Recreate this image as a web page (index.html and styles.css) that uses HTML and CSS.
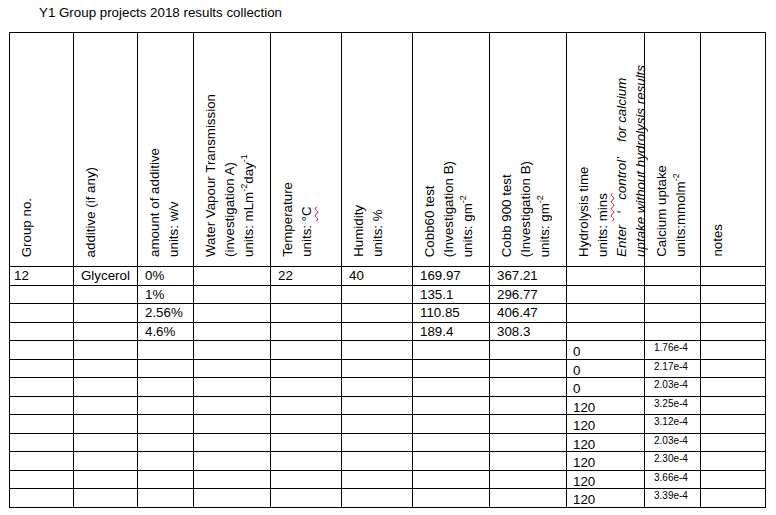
FILE: index.html
```html
<!DOCTYPE html>
<html lang="en">
<head>
<meta charset="utf-8">
<title>Y1 Group projects 2018 results collection</title>
<link rel="stylesheet" href="styles.css">
</head>
<body>
<div class="sheet">
  <p class="title">Y1 Group projects 2018 results collection</p>
  <div class="grid" role="table">
    <div class="hd"><div class="vt">Group no.</div></div>
    <div class="hd"><div class="vt">additive (if any)</div></div>
    <div class="hd"><div class="vt">amount of additive<br>units: w/v</div></div>
    <div class="hd"><div class="vt">Water Vapour Transmission<br>(investigation A)<br>units: mLm<sup class="sp">-2</sup>day<sup class="sp">-1</sup></div></div>
    <div class="hd"><div class="vt">Temperature<br>units: <span class="sq">°C</span></div></div>
    <div class="hd"><div class="vt">Humidity<br>units: %</div></div>
    <div class="hd"><div class="vt">Cobb60 test<br>(Investigation B)<br>units: gm<sup class="sp">-2</sup></div></div>
    <div class="hd"><div class="vt">Cobb 900 test<br>(Investigation B)<br>units: gm<sup class="sp">-2</sup></div></div>
    <div class="hd"><div class="vt">Hydrolysis time<br>units: <span class="sq">mins</span><br><span class="it">Enter&nbsp;&nbsp; ‘&nbsp;&nbsp; control’&nbsp;&nbsp;&nbsp; for calcium</span><br><span class="it">uptake without hydrolysis results</span></div></div>
    <div class="hd"><div class="vt">Calcium uptake<br>units:mmolm<sup class="sp">-2</sup></div></div>
    <div class="hd"><div class="vt">notes</div></div>

    <div class="c n">12</div><div class="c">Glycerol</div><div class="c">0%</div><div class="c"></div><div class="c">22</div><div class="c">40</div><div class="c">169.97</div><div class="c">367.21</div><div class="c"></div><div class="c"></div><div class="c"></div>
    <div class="c n"></div><div class="c"></div><div class="c">1%</div><div class="c"></div><div class="c"></div><div class="c"></div><div class="c">135.1</div><div class="c">296.77</div><div class="c"></div><div class="c"></div><div class="c"></div>
    <div class="c n"></div><div class="c"></div><div class="c">2.56%</div><div class="c"></div><div class="c"></div><div class="c"></div><div class="c">110.85</div><div class="c">406.47</div><div class="c"></div><div class="c"></div><div class="c"></div>
    <div class="c n"></div><div class="c"></div><div class="c">4.6%</div><div class="c"></div><div class="c"></div><div class="c"></div><div class="c">189.4</div><div class="c">308.3</div><div class="c"></div><div class="c"></div><div class="c"></div>
    <div class="c n"></div><div class="c"></div><div class="c"></div><div class="c"></div><div class="c"></div><div class="c"></div><div class="c"></div><div class="c"></div><div class="c h">0</div><div class="c ca">1.76e-4</div><div class="c"></div>
    <div class="c n"></div><div class="c"></div><div class="c"></div><div class="c"></div><div class="c"></div><div class="c"></div><div class="c"></div><div class="c"></div><div class="c h">0</div><div class="c ca">2.17e-4</div><div class="c"></div>
    <div class="c n"></div><div class="c"></div><div class="c"></div><div class="c"></div><div class="c"></div><div class="c"></div><div class="c"></div><div class="c"></div><div class="c h">0</div><div class="c ca">2.03e-4</div><div class="c"></div>
    <div class="c n"></div><div class="c"></div><div class="c"></div><div class="c"></div><div class="c"></div><div class="c"></div><div class="c"></div><div class="c"></div><div class="c h">120</div><div class="c ca">3.25e-4</div><div class="c"></div>
    <div class="c n"></div><div class="c"></div><div class="c"></div><div class="c"></div><div class="c"></div><div class="c"></div><div class="c"></div><div class="c"></div><div class="c h">120</div><div class="c ca">3.12e-4</div><div class="c"></div>
    <div class="c n"></div><div class="c"></div><div class="c"></div><div class="c"></div><div class="c"></div><div class="c"></div><div class="c"></div><div class="c"></div><div class="c h">120</div><div class="c ca">2.03e-4</div><div class="c"></div>
    <div class="c n"></div><div class="c"></div><div class="c"></div><div class="c"></div><div class="c"></div><div class="c"></div><div class="c"></div><div class="c"></div><div class="c h">120</div><div class="c ca">2.30e-4</div><div class="c"></div>
    <div class="c n"></div><div class="c"></div><div class="c"></div><div class="c"></div><div class="c"></div><div class="c"></div><div class="c"></div><div class="c"></div><div class="c h">120</div><div class="c ca">3.66e-4</div><div class="c"></div>
    <div class="c n"></div><div class="c"></div><div class="c"></div><div class="c"></div><div class="c"></div><div class="c"></div><div class="c"></div><div class="c"></div><div class="c h">120</div><div class="c ca">3.39e-4</div><div class="c"></div>
  </div>
</div>
</body>
</html>
```

FILE: styles.css
```css
* {
  box-sizing: border-box;
}

body {
  margin: 0;
  background: #ffffff;
  color: #000000;
  font-family: "Liberation Sans", Arial, sans-serif;
  font-size: 13.33px;
}

.sheet {
  padding: 3px 0 0 9px;
}

.title {
  margin: 0;
  padding-left: 30px;
  height: 29px;
  line-height: 19px;
}

.grid {
  display: grid;
  width: 757px;
  grid-template-columns: 64px 64px 56px 77px 71px 71px 77px 77px 78px 56px 65px;
  grid-template-rows: 234px repeat(13, 18.5px);
  border-top: 1px solid #000;
  border-left: 1px solid #000;
}

.hd {
  display: flex;
  align-items: flex-end;
  justify-content: flex-start;
  padding: 0 0 9px 7px;
  border-right: 1px solid #000;
  border-bottom: 1px solid #000;
  min-width: 0;
}

.vt {
  writing-mode: vertical-rl;
  transform: rotate(180deg);
  line-height: 19px;
  white-space: nowrap;
}

.sp {
  font-size: 0.68em;
  line-height: 0;
  vertical-align: super;
}

.it {
  font-style: italic;
}

.sq {
  text-decoration: underline wavy #e01010;
  text-decoration-thickness: 1px;
  text-underline-position: left;
}

.c {
  border-right: 1px solid #000;
  border-bottom: 1px solid #000;
  padding-left: 7px;
  line-height: 17px;
  white-space: nowrap;
  overflow: hidden;
  min-width: 0;
}

.n {
  padding-left: 4px;
}

.h {
  padding-left: 6px;
  padding-top: 2px;
}

.ca {
  padding-left: 9px;
  font-size: 10px;
  line-height: 14px;
}
```
